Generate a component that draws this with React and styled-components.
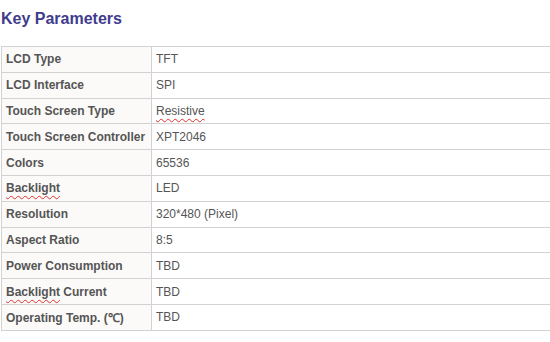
import React from "react";
import styled, { createGlobalStyle } from "styled-components";

const Global = createGlobalStyle`
  html, body { margin: 0; padding: 0; background: #fff; overflow: hidden; }
  body { font-family: "Liberation Sans", Arial, sans-serif; }
`;

const Page = styled.div`
  width: 549px;
  padding: 10px 0 0 1px;
`;

const Title = styled.h2`
  margin: 0 0 18px 0;
  font-size: 16px;
  line-height: 18px;
  font-weight: bold;
  color: #3f3c8e;
`;

const Table = styled.table`
  border-collapse: collapse;
  width: 549px;
  font-size: 12px;
  color: #555;
`;

const Row = styled.tr`
  height: 25.8px;
`;

const Key = styled.th`
  width: 141px;
  padding: 0 4px;
  text-align: left;
  font-weight: bold;
  background: #fbfaf8;
  border: 1px solid #d2d2d2;
  white-space: nowrap;
`;

const Value = styled.td`
  padding: 0 4px;
  border: 1px solid #d2d2d2;
  border-right: none;
  background: #fff;
`;

const Spell = styled.span`
  text-decoration: underline wavy #e03030;
  text-decoration-thickness: 1px;
  text-underline-offset: 3px;
`;

const rows = [
  ["LCD Type", "TFT"],
  ["LCD Interface", "SPI"],
  ["Touch Screen Type", <Spell key="r">Resistive</Spell>],
  ["Touch Screen Controller", "XPT2046"],
  ["Colors", "65536"],
  [<Spell key="b">Backlight</Spell>, "LED"],
  ["Resolution", "320*480 (Pixel)"],
  ["Aspect Ratio", "8:5"],
  ["Power Consumption", "TBD"],
  [<><Spell>Backlight</Spell> Current</>, "TBD"],
  ["Operating Temp. (℃)", "TBD"],
];

export default function App() {
  return (
    <Page>
      <Global />
      <Title>Key Parameters</Title>
      <Table>
        <tbody>
          {rows.map(([k, v], i) => (
            <Row key={i}>
              <Key>{k}</Key>
              <Value>{v}</Value>
            </Row>
          ))}
        </tbody>
      </Table>
    </Page>
  );
}
